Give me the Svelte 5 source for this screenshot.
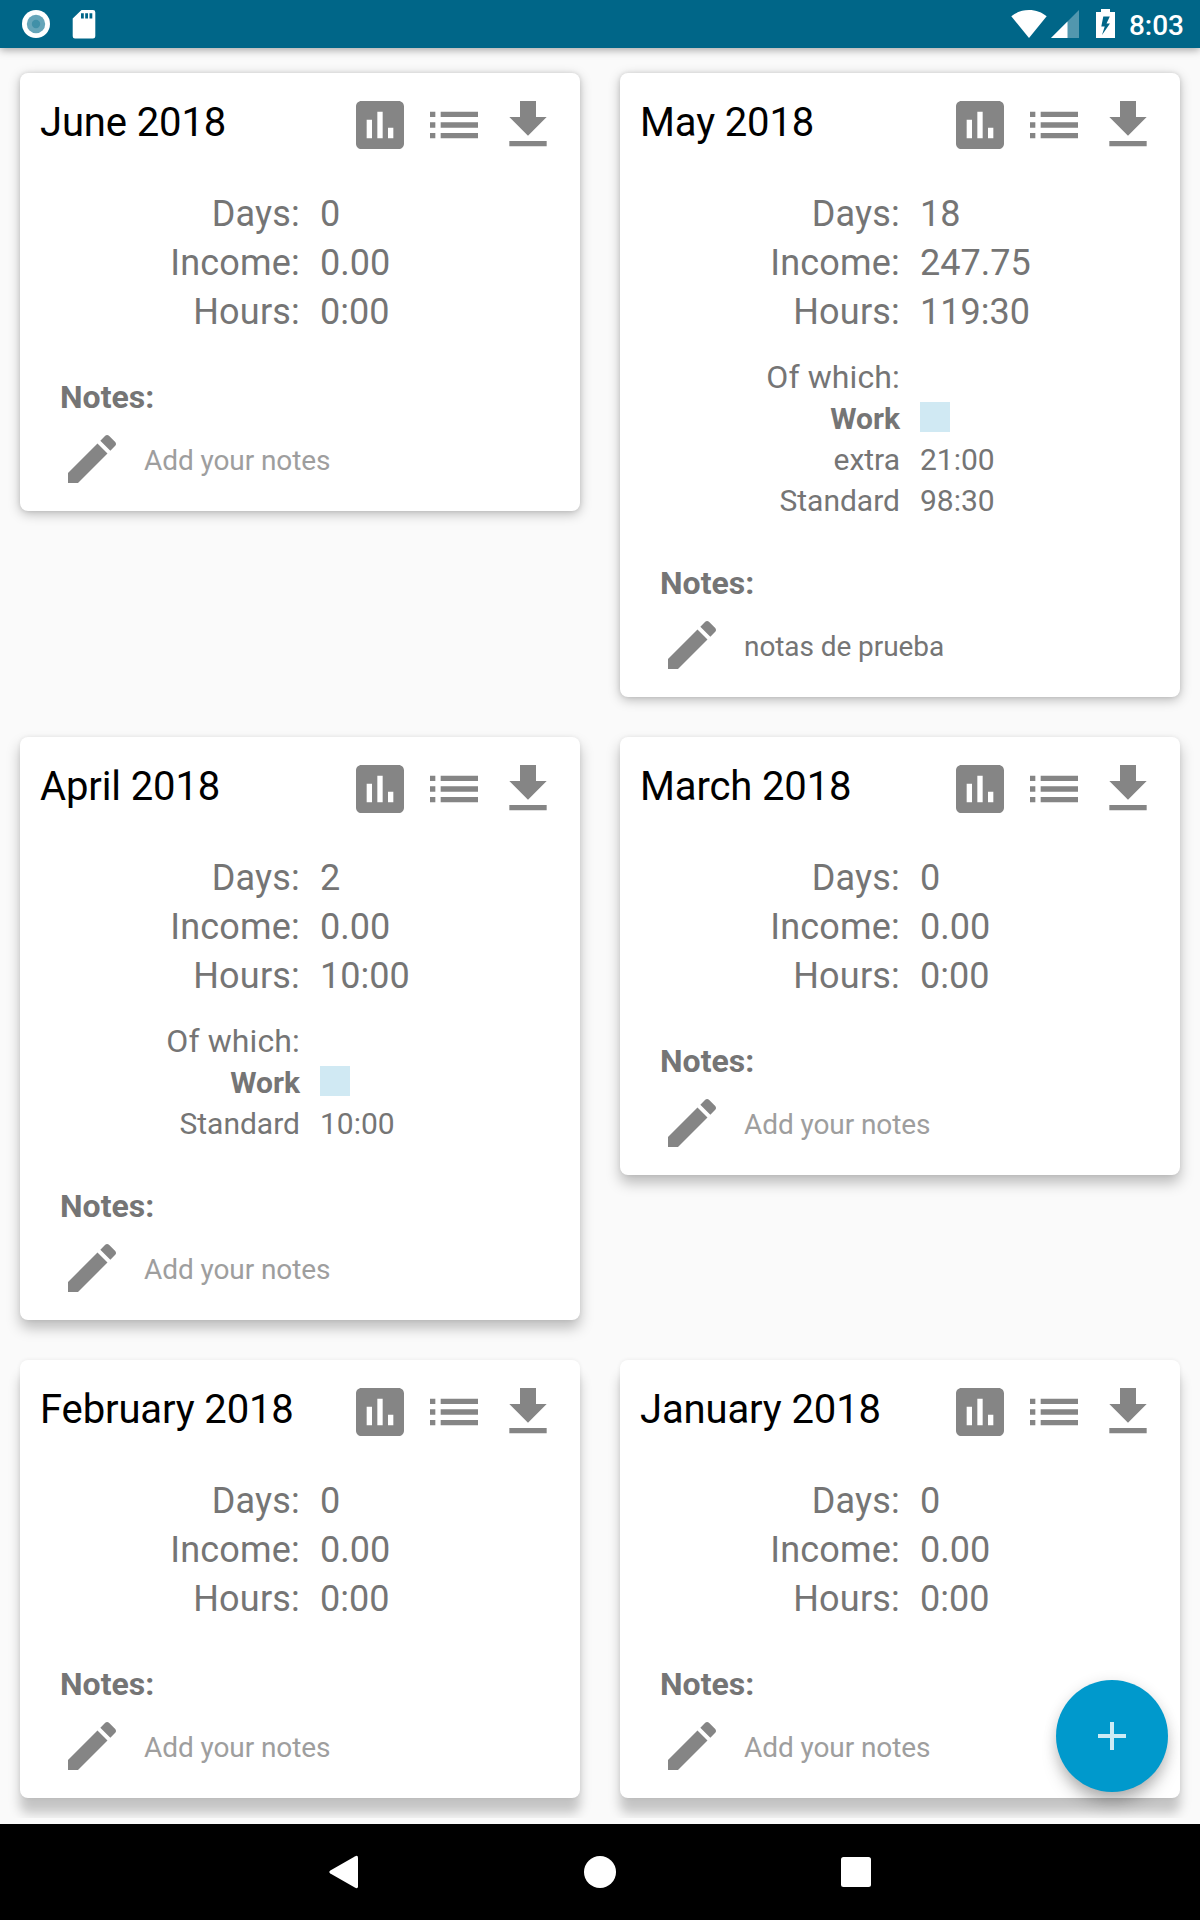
<script lang="ts">
	interface Shift {
		label: string;
		hours: string;
	}

	interface Month {
		title: string;
		days: number;
		income: string;
		hours: string;
		shifts: Shift[];
		note: string;
	}

	const months: Month[] = [
		{ title: 'June 2018', days: 0, income: '0.00', hours: '0:00', shifts: [], note: '' },
		{
			title: 'May 2018',
			days: 18,
			income: '247.75',
			hours: '119:30',
			shifts: [
				{ label: 'extra', hours: '21:00' },
				{ label: 'Standard', hours: '98:30' }
			],
			note: 'notas de prueba'
		},
		{
			title: 'April 2018',
			days: 2,
			income: '0.00',
			hours: '10:00',
			shifts: [{ label: 'Standard', hours: '10:00' }],
			note: ''
		},
		{ title: 'March 2018', days: 0, income: '0.00', hours: '0:00', shifts: [], note: '' },
		{ title: 'February 2018', days: 0, income: '0.00', hours: '0:00', shifts: [], note: '' },
		{ title: 'January 2018', days: 0, income: '0.00', hours: '0:00', shifts: [], note: '' }
	];

	const actions = [
		{
			name: 'Statistics',
			path: 'M19 3H5c-1.1 0-2 .9-2 2v14c0 1.1.9 2 2 2h14c1.1 0 2-.9 2-2V5c0-1.1-.9-2-2-2zM9 17H7v-7h2v7zm4 0h-2V7h2v10zm4 0h-2v-4h2v4z'
		},
		{
			name: 'Details',
			path: 'M3 13h2v-2H3v2zm0 4h2v-2H3v2zm0-8h2V7H3v2zm4 4h14v-2H7v2zm0 4h14v-2H7v2zM7 7v2h14V7H7z'
		},
		{ name: 'Download', path: 'M19 9h-4V3H9v6H5l7 7 7-7zM5 18v2h14v-2H5z' }
	];

	const editPath =
		'M3 17.25V21h3.75L17.81 9.94l-3.75-3.75L3 17.25zM20.71 7.04c.39-.39.39-1.02 0-1.41l-2.34-2.34c-.39-.39-1.02-.39-1.41 0l-1.83 1.83 3.75 3.75 1.83-1.83z';
</script>

<div class="screen">
	<header class="status-bar">
		<svg width="28" height="28" viewBox="0 0 28 28">
			<circle cx="14" cy="14" r="14" fill="#fff" />
			<circle cx="14" cy="14" r="9.2" fill="#66a5b9" />
			<circle cx="14" cy="14" r="4.2" fill="#4090a8" />
		</svg>
		<svg class="sd" width="24" height="30" viewBox="0 0 24 30">
			<path
				fill="#fff"
				fill-rule="evenodd"
				d="M9.5 1H21a2.3 2.3 0 0 1 2.3 2.3v24A2.3 2.3 0 0 1 21 29.5H3A2.3 2.3 0 0 1 .7 27.2V9.5zM9 4.2v5.3h2.8V4.2zm4.2 0v5.3H16V4.2zm4.3 0v5.3h2.8V4.2z"
			/>
		</svg>
		<div class="status-right">
			<svg width="36" height="28" viewBox="0 0 36 28">
				<path fill="#fff" d="M18 28 .3 6.3C5 2.3 11 0 18 0s13 2.3 17.7 6.3z" />
			</svg>
			<svg class="signal" width="28" height="28" viewBox="0 0 28 28">
				<path fill="#fff" fill-opacity=".32" d="M28 0v28H0z" />
				<path fill="#fff" d="M16.5 11.5V28H0z" />
			</svg>
			<svg class="battery" width="19" height="29" viewBox="0 0 19 29">
				<path
					fill="#fff"
					fill-rule="evenodd"
					d="M5 0h9v3h5v26H0V3h5zM7.3 7.5l-2 10h3.400l-2.700 8.500 8-11.500h-3.500l3.300-7z"
				/>
			</svg>
			<span class="clock">8:03</span>
		</div>
	</header>

	<main class="months">
		{#each months as month (month.title)}
			<section class="card">
				<div class="card-header">
					<h2>{month.title}</h2>
					<div class="actions">
						{#each actions as action (action.name)}
							<button class="icon-button" aria-label={action.name}>
								<svg viewBox="0 0 24 24"><path d={action.path} /></svg>
							</button>
						{/each}
					</div>
				</div>

				<dl class="totals">
					<dt>Days:</dt>
					<dd>{month.days}</dd>
					<dt>Income:</dt>
					<dd>{month.income}</dd>
					<dt>Hours:</dt>
					<dd>{month.hours}</dd>
				</dl>

				{#if month.shifts.length}
					<dl class="breakdown">
						<dt class="of-which">Of which:</dt>
						<dd></dd>
						<dt class="job">Work</dt>
						<dd><span class="swatch"></span></dd>
						{#each month.shifts as shift (shift.label)}
							<dt>{shift.label}</dt>
							<dd>{shift.hours}</dd>
						{/each}
					</dl>
				{/if}

				<h3>Notes:</h3>
				<div class="note">
					<button class="icon-button" aria-label="Edit notes">
						<svg viewBox="0 0 24 24"><path d={editPath} /></svg>
					</button>
					<span class="note-text" class:placeholder={!month.note}>
						{month.note || 'Add your notes'}
					</span>
				</div>
			</section>
		{/each}
	</main>

	<button class="fab" aria-label="Add">
		<svg width="28" height="28" viewBox="0 0 28 28">
			<path fill="#fff" fill-opacity=".8" d="M12 0h4v12h12v4H16v12h-4V16H0v-4h12z" />
		</svg>
	</button>

	<nav class="nav-bar">
		<svg width="31" height="36" viewBox="0 0 31 36">
			<path
				fill="#fff"
				d="M2.3 16.5 26.8 2.4Q30 .6 30 3.8v28.4q0 3.2-3.2 1.4L2.3 19.5Q.3 18 2.3 16.5z"
			/>
		</svg>
		<svg width="32" height="32" viewBox="0 0 32 32">
			<circle cx="16" cy="16" r="16" fill="#fff" />
		</svg>
		<svg width="30" height="30" viewBox="0 0 30 30">
			<rect width="30" height="30" rx="2.5" fill="#fff" />
		</svg>
	</nav>
</div>

<style>
	:global(body) {
		margin: 0;
	}

	.screen {
		position: relative;
		display: flex;
		flex-direction: column;
		width: 1200px;
		height: 1920px;
		overflow: hidden;
		background: #fafafa;
		color: #757575;
		font-family: Roboto, sans-serif;
	}

	.screen * {
		box-sizing: border-box;
	}

	svg {
		display: block;
		flex-shrink: 0;
	}

	h2,
	h3,
	dl,
	dd {
		margin: 0;
	}

	/* Status bar */
	.status-bar {
		position: relative;
		z-index: 1;
		display: flex;
		align-items: center;
		height: 48px;
		padding: 0 16px 0 22px;
		background: #006688;
		box-shadow: 0 2px 8px rgba(0, 0, 0, 0.35);
	}

	.sd {
		margin-left: 22px;
	}

	.status-right {
		display: flex;
		align-items: center;
		margin-left: auto;
	}

	.signal {
		margin-left: 4px;
	}

	.battery {
		margin: -1px 14px 0 17px;
	}

	.clock {
		padding-top: 3px;
		color: #fff;
		font-size: 28px;
		font-weight: 500;
		line-height: 48px;
	}

	/* Month cards */
	.months {
		display: grid;
		grid-template-columns: 560px 560px;
		gap: 40px;
		align-items: start;
		align-content: start;
		height: 1770px;
		padding: 25px 20px 0;
		overflow: hidden;
	}

	.card {
		padding: 20px 0;
		border-radius: 8px;
		background: #fff;
		box-shadow:
			0 3px 12px rgba(0, 0, 0, 0.26),
			0 0 4px rgba(0, 0, 0, 0.1);
	}

	/* Shadows drop further the lower the card sits */
	.card:nth-child(n + 3) {
		box-shadow:
			0 8px 14px rgba(0, 0, 0, 0.25),
			0 0 4px rgba(0, 0, 0, 0.07);
	}

	.card:nth-child(n + 5) {
		box-shadow:
			0 15px 12px rgba(0, 0, 0, 0.22),
			0 0 4px rgba(0, 0, 0, 0.07);
	}

	.card-header {
		display: flex;
		justify-content: space-between;
		height: 64px;
		padding: 0 20px;
	}

	h2 {
		color: #000;
		font-size: 40px;
		font-weight: 400;
		line-height: 60px;
		letter-spacing: -0.13px;
	}

	.actions {
		display: flex;
		gap: 10px;
	}

	.icon-button {
		width: 64px;
		height: 64px;
		padding: 0;
		border: none;
		background: none;
	}

	.icon-button svg {
		width: 64px;
		height: 64px;
		fill: #858585;
	}

	.totals,
	.breakdown {
		display: grid;
		grid-template-columns: 280px 1fr;
		column-gap: 20px;
	}

	.totals {
		margin-top: 33px;
		font-size: 36px;
		line-height: 49px;
	}

	.totals dt {
		letter-spacing: 0.2px;
	}

	.breakdown {
		grid-auto-rows: 41px;
		padding: 20px 0 2px;
		font-size: 30px;
		line-height: 41px;
	}

	dt {
		text-align: right;
	}

	.of-which {
		font-size: 32px;
		letter-spacing: 0.12px;
	}

	.job {
		font-weight: 700;
	}

	.swatch {
		display: block;
		width: 30px;
		height: 30px;
		margin-top: 4px;
		background: #d0e9f3;
	}

	h3 {
		margin: 39px 0 9px 40px;
		font-size: 32px;
		font-weight: 700;
		line-height: 42px;
	}

	.note {
		display: flex;
		align-items: center;
		gap: 20px;
		padding-left: 40px;
	}

	.note-text {
		padding-top: 2px;
		font-size: 28px;
		letter-spacing: -0.08px;
	}

	.placeholder {
		color: #9e9e9e;
	}

	/* Floating action button */
	.fab {
		position: absolute;
		right: 32px;
		bottom: 128px;
		display: flex;
		align-items: center;
		justify-content: center;
		width: 112px;
		height: 112px;
		padding: 0;
		border: none;
		border-radius: 50%;
		background: #0099cc;
		box-shadow:
			0 14px 18px -4px rgba(0, 0, 0, 0.27),
			0 2px 14px rgba(0, 0, 0, 0.12);
	}

	/* System navigation */
	.nav-bar {
		display: flex;
		align-items: center;
		justify-content: space-between;
		height: 96px;
		margin-top: auto;
		padding: 0 329px 0 328px;
		background: #000;
	}
</style>
